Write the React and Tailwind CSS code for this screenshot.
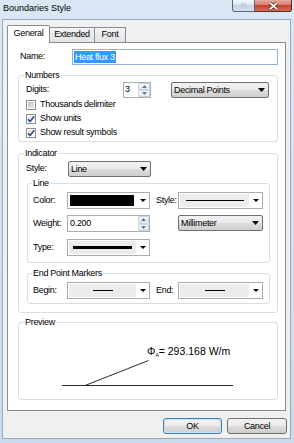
import React from "react";

const Arrow = () => (
  <svg width="7" height="4" viewBox="0 0 7 4" className="shrink-0">
    <path d="M0 0H7L3.5 4Z" fill="#000" />
  </svg>
);

const SmallArrow = () => (
  <svg width="6" height="3" viewBox="0 0 6 3" className="shrink-0">
    <path d="M0 0H6L3 3Z" fill="#000" />
  </svg>
);

function BtnCombo({ className = "", label }) {
  return (
    <div
      className={`flex items-center h-[16px] rounded-[2px] border border-[#707070] bg-[linear-gradient(#f2f2f2,#ebebeb_50%,#dddddd_50%,#cfcfcf)] pl-[2px] pr-[3px] ${className}`}
    >
      <span className="flex-1 whitespace-nowrap leading-[14px]">{label}</span>
      <Arrow />
    </div>
  );
}

function ListCombo({ className = "", color = false, children }) {
  return (
    <div className={`flex h-[17px] border border-[#a9acb2] bg-white ${className}`}>
      {color ? (
        <div className="flex-1 p-[2px]">
          <div className="w-full h-full bg-black" />
        </div>
      ) : (
        <div className="flex-1 p-[1px] pr-0">
          <div className="w-full h-full bg-[#ececec] flex items-center justify-center">{children}</div>
        </div>
      )}
      <div className="w-[13px] flex items-center justify-center">
        <SmallArrow />
      </div>
    </div>
  );
}

function SpinBtn({ up }) {
  return (
    <div className="flex-1 flex items-center justify-center border border-[#c9d3df] rounded-[1px] bg-[linear-gradient(#f7f9fc,#e0e8f1)]">
      <svg width="5" height="3" viewBox="0 0 5 3">
        <path d={up ? "M0 3H5L2.5 0Z" : "M0 0H5L2.5 3Z"} fill="#5b76a3" />
      </svg>
    </div>
  );
}

function Spin({ className = "", value, btnW = "w-[12px]", pl = "pl-[1px]" }) {
  return (
    <div className={`flex border border-[#abadb3] bg-white ${className}`}>
      <span className={`flex-1 flex items-center ${pl}`}>{value}</span>
      <div className={`flex flex-col ${btnW}`}>
        <SpinBtn up />
        <SpinBtn />
      </div>
    </div>
  );
}

function Check({ checked, label }) {
  return (
    <div className="flex items-center h-[14px]">
      <div className="relative w-[10px] h-[10px] border border-[#8e8f8f] p-[1px] bg-white mr-[4px] shrink-0">
        <div
          className={`w-full h-full ${
            checked
              ? "bg-[linear-gradient(135deg,#e2e2e2,#fafafa)]"
              : "bg-[linear-gradient(135deg,#bdbdbd,#f0f0f0)]"
          }`}
        />
        {checked && (
          <svg className="absolute left-[-1px] top-[-1px]" width="10" height="10" viewBox="0 0 10 10">
            <path d="M2 5.2 L4 7.6 L8.3 2.2" stroke="#2f4b8f" strokeWidth="1.6" fill="none" />
          </svg>
        )}
      </div>
      <span className="whitespace-nowrap">{label}</span>
    </div>
  );
}

export default function App() {
  return (
    <div className="w-[294px] h-[443px] overflow-hidden bg-[linear-gradient(180deg,#dbe7f4,#c9daee)] font-['Liberation_Sans',Arial,sans-serif] text-[9px] text-black tracking-[-0.3px]">
      {/* title bar */}
      <div className="h-[19px] flex items-start">
        <div className="pl-[3px] pt-[3px] leading-[11px] tracking-normal text-[9px]">Boundaries Style</div>
        <div className="ml-auto mr-[2px] flex h-[12px]">
          <div className="w-[23px] h-full border border-t-0 border-[#5b6778] rounded-bl-[3px] bg-[linear-gradient(#f4f7fb,#dbe4ef_50%,#c6d3e3_50%,#d3dfed)] flex items-center justify-center text-[8px] font-bold tracking-normal text-[#f7f9fb] [text-shadow:0_0_1px_#2f3a4a]">
            ?
          </div>
          <div className="w-[37px] h-full border border-l-0 border-t-0 border-[#5e2a24] rounded-br-[3px] bg-[linear-gradient(#e9a99d,#d7786a_50%,#c5432f_50%,#d0705c)] flex items-center justify-center">
            <svg width="11" height="8" viewBox="0 0 11 8">
              <path d="M2 1 L9 7 M9 1 L2 7" stroke="#4b1d16" strokeWidth="3.2" />
              <path d="M2 1 L9 7 M9 1 L2 7" stroke="#fff" strokeWidth="1.8" />
            </svg>
          </div>
        </div>
      </div>

      {/* client area */}
      <div className="ml-[2px] w-[289px] h-[420px] border border-[#98a9bf] bg-[#f0f0f0] flex flex-col px-[4px] pt-[5px] pb-[4px]">
        {/* tabs */}
        <div className="flex items-end h-[17px]">
          <div className="relative z-10 w-[43px] h-[18px] -mb-[1px] border border-b-0 border-[#898c95] bg-white rounded-t-[2px] flex justify-center pt-[2px] leading-[11px]">
            General
          </div>
          <div className="w-[45px] h-[15px] border-t border-r border-[#898c95] bg-[linear-gradient(#f3f3f3,#e3e3e3)] flex justify-center pt-[1px] leading-[11px]">
            Extended
          </div>
          <div className="w-[31px] h-[15px] border-t border-r border-[#898c95] bg-[linear-gradient(#f3f3f3,#e3e3e3)] flex justify-center pt-[1px] leading-[11px]">
            Font
          </div>
        </div>

        {/* tab panel */}
        <div className="h-[369px] border border-[#898c95] bg-white flex flex-col pt-[6px]">
          <div className="flex items-center h-[16px] ml-[12px]">
            <span className="w-[52px]">Name:</span>
            <div className="w-[206px] h-[16px] border border-[#8fb3d9] bg-white flex items-center pl-[1px]">
              <span className="bg-[#3399ff] text-white h-[12px] leading-[12px] px-[1px]">Heat flux 3</span>
            </div>
          </div>

          {/* Numbers */}
          <fieldset className="mt-[4px] ml-[10px] w-[260px] min-w-0 border border-[#d5dfe5] rounded-[3px] px-[7px] pb-[1px]">
            <legend className="-ml-[2px] px-[1px] h-[13px] leading-[13px]">Numbers</legend>
            <div className="flex items-center h-[16px]">
              <span className="w-[97px]">Digits:</span>
              <Spin className="w-[28px] h-[16px]" value="3" />
              <BtnCombo className="ml-[20px] w-[98px]" label="Decimal Points" />
            </div>
            <Check checked={false} label="Thousands delimiter" />
            <Check checked label="Show units" />
            <Check checked label="Show result symbols" />
          </fieldset>

          {/* Indicator */}
          <fieldset className="mt-[5px] ml-[10px] w-[260px] min-w-0 border border-[#d5dfe5] rounded-[3px] px-[7px] pb-[8px]">
            <legend className="-ml-[2px] px-[1px] h-[13px] leading-[13px]">Indicator</legend>
            <div className="flex items-center h-[16px] mt-[1px]">
              <span className="w-[42px]">Style:</span>
              <BtnCombo className="w-[83px]" label="Line" />
            </div>

            <fieldset className="ml-[1px] w-[243px] min-w-0 border border-[#d5dfe5] rounded-[3px] pl-[5px] pb-[6px]">
              <legend className="-ml-[1px] px-[1px] h-[13px] leading-[13px]">Line</legend>
              <div className="flex items-center h-[17px] mt-[2px]">
                <span className="w-[34px]">Color:</span>
                <ListCombo color className="w-[83px]" />
                <span className="ml-[6px] w-[22px]">Style:</span>
                <ListCombo className="w-[85px]">
                  <div className="w-[58px] h-[1px] bg-black" />
                </ListCombo>
              </div>
              <div className="flex items-start h-[17px] mt-[6px]">
                <span className="w-[34px] leading-[17px]">Weight:</span>
                <Spin className="w-[83px] h-[17px]" value="0.200" btnW="w-[11px]" pl="pl-[2px]" />
                <BtnCombo className="ml-[28px] w-[85px]" label="Millimeter" />
              </div>
              <div className="flex items-center h-[17px] mt-[7px]">
                <span className="w-[34px]">Type:</span>
                <ListCombo className="w-[83px]">
                  <div className="w-[59px] h-[3px] bg-black" />
                </ListCombo>
              </div>
            </fieldset>

            <fieldset className="mt-[4px] ml-[1px] w-[243px] min-w-0 border border-[#d5dfe5] rounded-[3px] pl-[5px] pb-[4px]">
              <legend className="-ml-[1px] px-[1px] h-[13px] leading-[13px]">End Point Markers</legend>
              <div className="flex items-center h-[17px] mt-[2px]">
                <span className="w-[34px]">Begin:</span>
                <ListCombo className="w-[83px]">
                  <div className="w-[20px] h-[1px] bg-black" />
                </ListCombo>
                <span className="ml-[6px] w-[22px]">End:</span>
                <ListCombo className="w-[85px]">
                  <div className="w-[20px] h-[1px] bg-black" />
                </ListCombo>
              </div>
            </fieldset>
          </fieldset>

          {/* Preview */}
          <fieldset className="mt-[3px] ml-[10px] w-[260px] min-w-0 border border-[#d5dfe5] rounded-[3px]">
            <legend className="ml-[5px] px-[1px] h-[13px] leading-[13px]">Preview</legend>
            <div className="relative h-[70px]">
              <svg className="absolute left-0 top-0" width="258" height="70" viewBox="0 0 258 70">
                <path d="M129.5 31.5 L66 56.5" stroke="#2b2b2b" strokeWidth="1" fill="none" />
                <path d="M43 56.5 H214" stroke="#2b2b2b" strokeWidth="1" />
              </svg>
              <div className="absolute left-[128px] top-[17px] flex items-start text-[10.5px] leading-[10px] tracking-normal whitespace-nowrap">
                <span>Φ</span>
                <span className="text-[5px] leading-[5px] mt-[7px]">A</span>
                <span>= 293.168 W/m</span>
              </div>
            </div>
          </fieldset>
        </div>

        {/* buttons */}
        <div className="flex justify-end gap-[5px] mt-[7px] -mr-[1px]">
          <div className="w-[59px] h-[16px] rounded-[3px] border border-[#3c7fb1] bg-[linear-gradient(#f2f2f2,#ebebeb_50%,#dddddd_50%,#cfcfcf)] shadow-[inset_0_0_0_1px_#c8e4f5] flex items-center justify-center leading-[14px]">
            OK
          </div>
          <div className="w-[60px] h-[16px] rounded-[3px] border border-[#707070] bg-[linear-gradient(#f2f2f2,#ebebeb_50%,#dddddd_50%,#cfcfcf)] flex items-center justify-center leading-[14px]">
            Cancel
          </div>
        </div>
      </div>
    </div>
  );
}
